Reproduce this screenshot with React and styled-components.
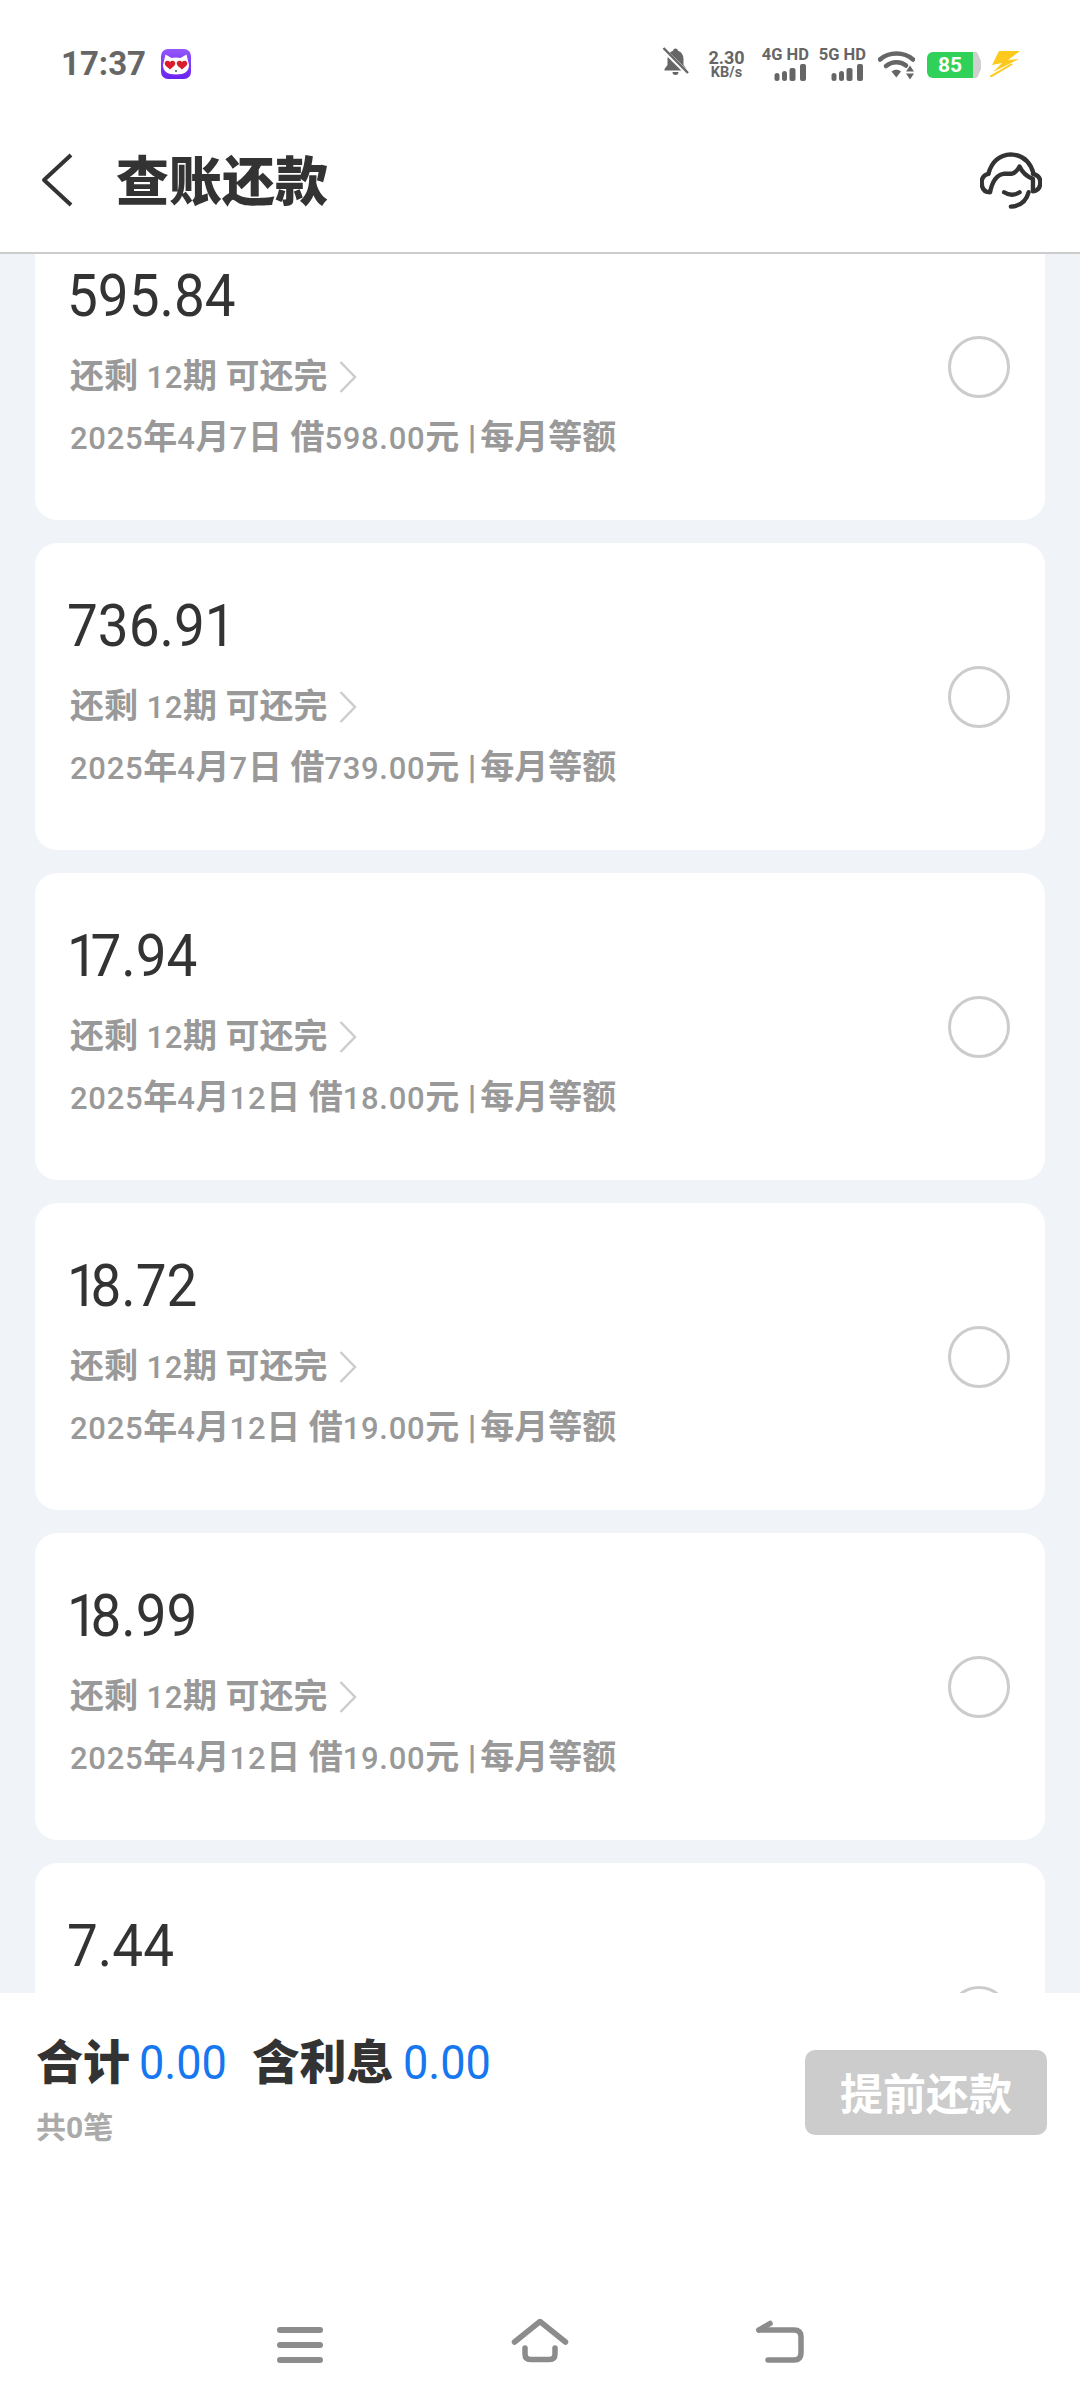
import React from "react";
import styled, { createGlobalStyle } from "styled-components";

const Global = createGlobalStyle`
  html, body { margin: 0; padding: 0; background: #fff; }
  * { box-sizing: border-box; }
`;
const CJK = `Roboto, "Noto Sans CJK SC", sans-serif`;

const Page = styled.div`
  width: 1080px; height: 2408px; display: flex; flex-direction: column;
  background: #fff; font-family: ${CJK}; overflow: hidden;
`;
const StatusBar = styled.div`
  height: 100px; flex: none; display: flex; align-items: flex-start; justify-content: space-between;
  padding: 47px 60px 0 61px; color: #666;
`;
const StatusLeft = styled.div`display: flex; align-items: center; gap: 15px; height: 33px;`;
const Time = styled.span`font-size: 33px; line-height: 33px; font-weight: 700; color: #666;`;
const StatusRight = styled.div`display: flex; align-items: flex-start;`;
const Speed = styled.div`
  display: flex; flex-direction: column; align-items: center; margin: 2px 17px 0 19px; width: 37px; font-weight: 700; color: #666;
`;
const SpeedValue = styled.span`font-size: 18px; line-height: 17px;`;
const SpeedUnit = styled.span`font-size: 14.5px; line-height: 14px;`;
const Signal = styled.div`display: flex; flex-direction: column; align-items: flex-end; width: 47px; margin-right: 10px;`;
const SignalLabel = styled.span`font-size: 16.5px; line-height: 16px; font-weight: 700; color: #666; white-space: nowrap;`;
const Battery = styled.div`
  width: 46px; height: 26px; margin-top: 5px; background: #2fd158; border-radius: 6px 0 0 6px; color: #fff;
  font-size: 21px; font-weight: 700; line-height: 26px; text-align: center;
`;
const BatteryTip = styled.div`
  width: 8px; height: 26px; margin-top: 5px; background: #cfcfcf; border-radius: 0 6px 6px 0;
  clip-path: polygon(0 0, 50% 0, 100% 35%, 100% 65%, 50% 100%, 0 100%);
`;

const Header = styled.div`
  height: 154px; flex: none; display: flex; align-items: center; justify-content: space-between;
  padding: 8px 38px 0 41px; border-bottom: 2px solid #cccccc;
`;
const HeaderLeft = styled.div`display: flex; align-items: center; gap: 43px;`;
const Title = styled.h1`margin: 6px 0 0; font-size: 53px; line-height: 60px; font-weight: 900; color: #333;`;

const Scroller = styled.div`flex: 1; min-height: 0; overflow: hidden; background: #f0f3f8;`;
const List = styled.div`display: flex; flex-direction: column; gap: 23px; padding: 0 35px; margin-top: -41px;`;
const Card = styled.div`
  height: 307px; background: #fff; border-radius: 22px; padding: 0 35px;
  display: flex; justify-content: space-between; align-items: flex-start;
`;
const Info = styled.div`display: flex; flex-direction: column; align-items: flex-start; padding-top: 53px;`;
const Amount = styled.div`
  margin-left: -3px; font-size: 59px; line-height: 60px; font-weight: 400; color: #333;
  transform: scaleX(0.93); transform-origin: left center;
`;
const NarrowOne = styled.span`letter-spacing: -8px;`;
const Meta = styled.div`
  display: flex; align-items: center; height: 40px; margin-top: ${p => p.$gap}px;
  font-size: 34px; line-height: 40px; font-weight: 700; color: #999; white-space: pre;
`;
const Num = styled.span`font-size: 31px; font-weight: 500; letter-spacing: 0.7px;`;
const Pipe = styled.span`margin-right: 4px;`;
const Radio = styled.div`
  width: 62px; height: 62px; margin-top: 123px; border-radius: 50%; border: 3px solid #ccc; flex: none;
`;

const Bottom = styled.div`height: 415px; flex: none; background: #fff; display: flex; flex-direction: column;`;
const Summary = styled.div`
  display: flex; justify-content: space-between; align-items: flex-start; padding: 40px 33px 0 36px; height: 325px;
`;
const Totals = styled.div`display: flex; flex-direction: column;`;
const TotalsRow = styled.div`display: flex; align-items: baseline; height: 60px;`;
const TotalLabel = styled.span`font-size: 47px; line-height: 60px; font-weight: 900; color: #333; margin: 0 9px 0 ${p => p.$ml}px;`;
const TotalValue = styled.span`
  font-size: 48px; line-height: 60px; font-weight: 400; color: #1677f0;
  display: inline-block; margin-right: -6px; transform: scaleX(0.94); transform-origin: left center;
`;
const Count = styled.div`font-size: 30px; line-height: 36px; font-weight: 700; color: #aaa; margin-top: 17px;`;
const PayButton = styled.button`
  width: 242px; height: 85px; margin-top: 17px; border: none; border-radius: 10px; background: #ccc; color: #fff;
  font-family: ${CJK}; font-size: 43px; font-weight: 700; padding: 0 0 3px;
`;
const NavBar = styled.div`
  display: flex; align-items: flex-start; justify-content: center; gap: 187.5px; padding-left: 1px;
`;

const items = [
  ["595.84", "2025年4月7日 借598.00元"],
  ["736.91", "2025年4月7日 借739.00元"],
  ["17.94", "2025年4月12日 借18.00元"],
  ["18.72", "2025年4月12日 借19.00元"],
  ["18.99", "2025年4月12日 借19.00元"],
  ["7.44", null],
];

const withNums = text =>
  text.split(/(\d[\d.]*)/).map((part, i) => (i % 2 ? <Num key={i}>{part}</Num> : part));
const withNarrowOnes = text =>
  text.split(/(1)/).map((part, i) => (i % 2 ? <NarrowOne key={i}>{part}</NarrowOne> : part));

const CatIcon = () => (
  <svg width="30" height="30" viewBox="0 0 30 30">
    <defs>
      <linearGradient id="cat" x1="0" y1="0" x2="0" y2="1">
        <stop offset="0" stopColor="#9257ff" /><stop offset="1" stopColor="#6a22ee" />
      </linearGradient>
    </defs>
    <rect width="30" height="30" rx="7" fill="url(#cat)" />
    <path d="M4.500 5.500 L10.500 9 Q15 8 19.500 9 L25.500 5.500 L28 16 Q28 25.500 15 25.500 Q2 25.500 2 16Z" fill="#fff" />
    <path d="M9 13c-2-2.400-6-1-5.200 2 .5 2 3 3.500 5.200 5.500 2.200-2 4.700-3.500 5.200-5.500.8-3-3.200-4.400-5.200-2z" fill="#d81e2c" />
    <path d="M21 13c-2-2.400-6-1-5.200 2 .5 2 3 3.500 5.200 5.500 2.200-2 4.700-3.500 5.200-5.500.8-3-3.200-4.400-5.200-2z" fill="#d81e2c" />
    <circle cx="15" cy="22" r="1" fill="#555" />
  </svg>
);
const BellOff = () => (
  <svg width="27" height="28" viewBox="0 0 27 28">
    <path d="M13.500 1.500c-1.500 0-2.300 1-2.500 2.200C7.300 5 5.500 8 5.500 12v6L2.500 22v1.500h22V22l-3-4v-6c0-4-1.800-7-5.500-8.300-.2-1.200-1-2.200-2.500-2.200zM10.500 25a3 3 0 0 0 6 0z" fill="#666" />
    <path d="M1 2 L26 27" stroke="#fff" strokeWidth="4.500" />
    <path d="M1.500 1 L26 26" stroke="#666" strokeWidth="2.500" />
  </svg>
);
const Bars = () => (
  <svg width="35" height="17" viewBox="0 0 35 17" style={{ marginTop: 1 }}>
    <rect x="0.500" y="9" width="5" height="8" rx="2.500" fill="#666" />
    <rect x="8" y="7" width="5" height="10" rx="2.500" fill="#666" />
    <rect x="15.500" y="4" width="6" height="13" rx="2" fill="#666" />
    <rect x="26" y="0" width="6" height="17" rx="2" fill="#666" />
  </svg>
);
const Wifi = () => (
  <svg width="37" height="30" viewBox="0 0 37 30" style={{ margin: "3px 12px 0 2px" }}>
    <path d="M2 9.500C11 1.500 26 1.500 35 9.500" stroke="#666" strokeWidth="4.500" fill="none" strokeLinecap="round" />
    <path d="M8 16c6-5 15-5 20 -.5" stroke="#666" strokeWidth="4.500" fill="none" strokeLinecap="round" />
    <path d="M13.500 21.500c3-2.500 7-2.500 9.500 0l-4.700 6z" fill="#666" />
    <path d="M32 15.500l4 6h-8zM32 29.500l-4-6h8z" fill="#666" />
  </svg>
);
const Bolt = () => (
  <svg width="30" height="26" viewBox="0 0 30 26" style={{ margin: "4px 0 0 9px" }}>
    <path d="M9 0H30L18 9 29 8 3 21 12 12 2 14z" fill="#fdc91c" />
    <path d="M0 26 L22 13" stroke="#fdc91c" strokeWidth="2" />
  </svg>
);
const Back = () => (
  <svg width="32" height="54" viewBox="0 0 32 54">
    <path d="M30 2 L3 27 L30 52" fill="none" stroke="#333" strokeWidth="4" strokeLinejoin="round" />
  </svg>
);
const Headset = () => (
  <svg width="62" height="57" viewBox="60 35 185 170" fill="none" stroke="#333" strokeWidth="13" strokeLinecap="round" strokeLinejoin="round">
    <path d="M85 100Q65 105 65 125Q65 155 90 155Q100 105 130 100L155 100Q170 95 178 78Q190 105 218 115V150" />
    <path d="M218 100Q240 105 240 125Q240 150 218 152" />
    <path d="M85 100Q100 45 152 42Q205 45 220 100" />
    <path d="M132 155Q155 170 178 155" />
    <path d="M205 155Q195 195 152 198" />
  </svg>
);
const Chevron = () => (
  <svg width="18" height="32" viewBox="0 0 18 32" style={{ marginLeft: 11 }}>
    <path d="M1.500 1L16 16L1.500 31" fill="none" stroke="#ccc" strokeWidth="2.500" />
  </svg>
);
const MenuIcon = () => (
  <svg width="46" height="46" viewBox="0 0 46 46" fill="none" stroke="#8c8c8c" strokeWidth="6" strokeLinecap="round">
    <path d="M3 12H43M3 27H43M3 42H43" />
  </svg>
);
const HomeIcon = () => (
  <svg width="58" height="46" viewBox="0 0 58 46" fill="none" stroke="#8c8c8c" strokeWidth="5.500" strokeLinecap="round" strokeLinejoin="round">
    <path d="M3.500 24L29 3.500L54.500 24" />
    <path d="M14 30V36Q14 41.500 19.500 41.500H38.500Q44 41.500 44 36V30" />
  </svg>
);
const ReturnIcon = () => (
  <svg width="48" height="46" viewBox="0 0 48 46" fill="none" stroke="#8c8c8c" strokeWidth="5.500" strokeLinecap="round" strokeLinejoin="round">
    <path d="M3 12H38Q45 12 45 19V35Q45 42 38 42H12" />
    <path d="M3 12L14 5.500" />
  </svg>
);

export default function App() {
  return (
    <Page>
      <Global />
      <StatusBar>
        <StatusLeft>
          <Time>17:37</Time>
          <CatIcon />
        </StatusLeft>
        <StatusRight>
          <BellOff />
          <Speed>
            <SpeedValue>2.30</SpeedValue>
            <SpeedUnit>KB/s</SpeedUnit>
          </Speed>
          <Signal><SignalLabel>4G HD</SignalLabel><Bars /></Signal>
          <Signal><SignalLabel>5G HD</SignalLabel><Bars /></Signal>
          <Wifi />
          <Battery>85</Battery>
          <BatteryTip />
          <Bolt />
        </StatusRight>
      </StatusBar>
      <Header>
        <HeaderLeft>
          <Back />
          <Title>查账还款</Title>
        </HeaderLeft>
        <Headset />
      </Header>
      <Scroller>
        <List>
          {items.map(([amount, line]) => (
            <Card key={amount}>
              <Info>
                <Amount>{withNarrowOnes(amount)}</Amount>
                {line && (
                  <>
                    <Meta $gap={31}><span>还剩 {withNums("12")}期 可还完</span><Chevron /></Meta>
                    <Meta $gap={21}><span>{withNums(line)} <Pipe>|</Pipe>每月等额</span></Meta>
                  </>
                )}
              </Info>
              <Radio />
            </Card>
          ))}
        </List>
      </Scroller>
      <Bottom>
        <Summary>
          <Totals>
            <TotalsRow>
              <TotalLabel $ml={0}>合计</TotalLabel>
              <TotalValue>0.00</TotalValue>
              <TotalLabel $ml={26}>含利息</TotalLabel>
              <TotalValue>0.00</TotalValue>
            </TotalsRow>
            <Count>共0笔</Count>
          </Totals>
          <PayButton>提前还款</PayButton>
        </Summary>
        <NavBar>
          <MenuIcon />
          <HomeIcon />
          <ReturnIcon />
        </NavBar>
      </Bottom>
    </Page>
  );
}
